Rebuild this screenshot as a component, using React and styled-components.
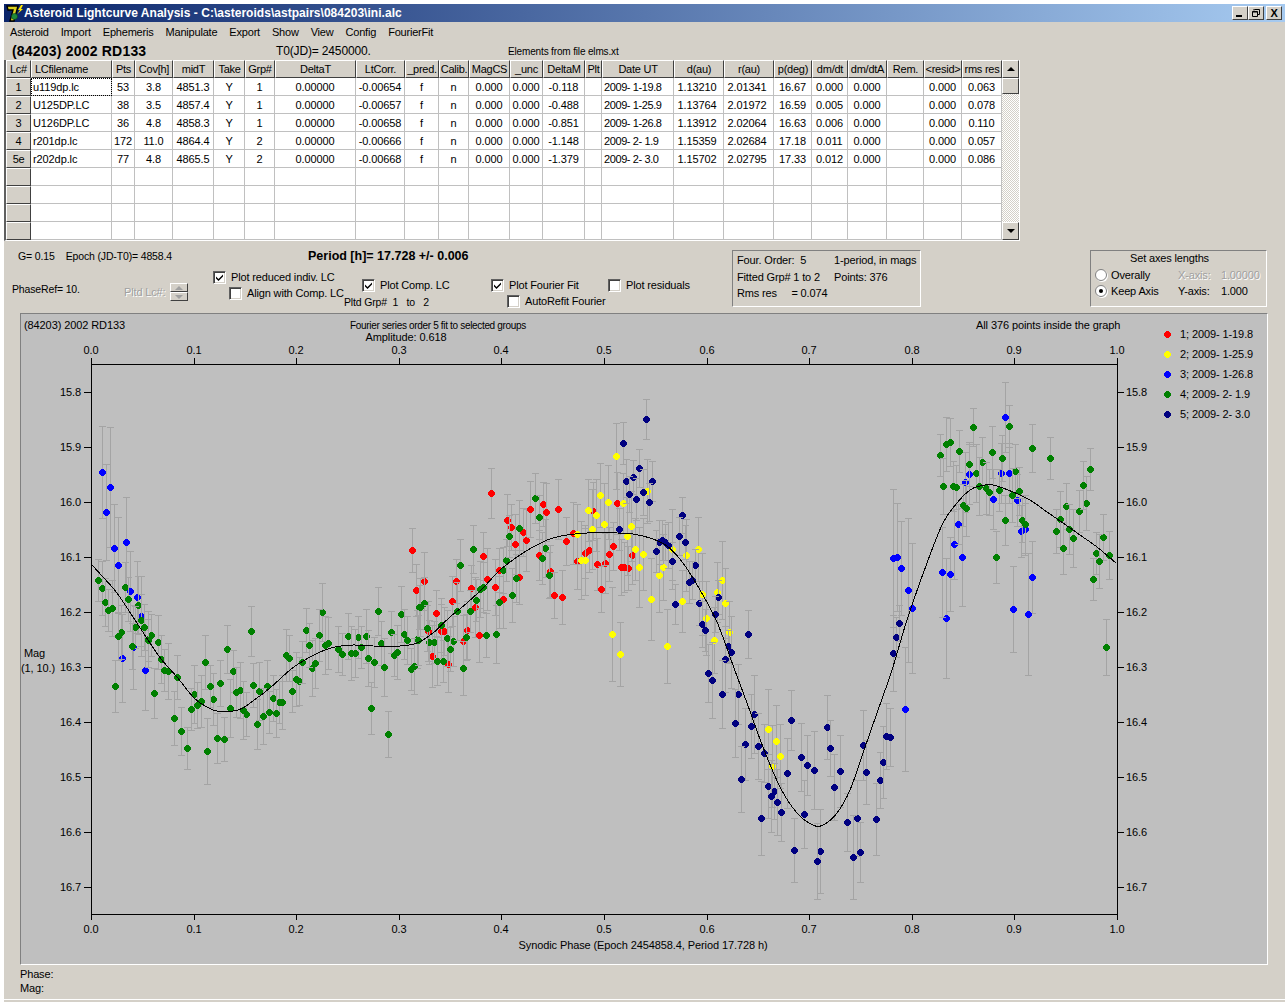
import React from "react";
import styled, { createGlobalStyle } from "styled-components";

const GlobalStyle = createGlobalStyle`
html, body { margin: 0; padding: 0; background: #fff; }
body { font-family: "Liberation Sans", Arial, sans-serif; font-size: 11px; color: #000; }
`;

const Face = "#d4d0c8";

const Window = styled.div`
width: 1288px;
height: 1002px;
box-sizing: border-box;
background: ${Face};
border-top: 4px solid #fff;
border-left: 4px solid #fff;
border-right: 3px solid #fff;
display: flex;
flex-direction: column;
overflow: hidden;
letter-spacing: -0.15px;
`;

const TitleBar = styled.div`
height: 18px;
flex: none;
display: flex;
align-items: center;
padding: 0 3px 0 2px;
background: linear-gradient(to right, #0a246a, #a6caf0);
`;

const TitleText = styled.div`
color: #fff;
font-weight: bold;
font-size: 12px;
letter-spacing: 0.03px;
flex: 1;
white-space: pre;
`;

const WinButton = styled.div`
width: 16px;
height: 14px;
box-sizing: border-box;
background: ${Face};
border: 1px solid;
border-color: #fff #404040 #404040 #fff;
display: flex;
align-items: center;
justify-content: center;
font-weight: bold;
font-size: 11px;
line-height: 1;
`;

const CloseButton = styled(WinButton)`
margin-left: 2px;
`;

const MenuBar = styled.div`
height: 20px;
flex: none;
display: flex;
align-items: center;
gap: 12px;
padding-left: 6px;
`;

const MenuItem = styled.span`
letter-spacing: -0.2px;
`;

const InfoRow = styled.div`
height: 18px;
flex: none;
display: grid;
grid-template-columns: 264px 232px 1fr;
align-items: center;
padding-left: 8px;
`;

const AsteroidName = styled.div`
font-weight: bold;
font-size: 14px;
letter-spacing: 0.2px;
`;

const SmallText = styled.div`
font-size: ${(p) => p.$size || 11}px;
white-space: pre;
`;

const GridFrame = styled.div`
flex: none;
width: 1016px;
box-sizing: border-box;
display: flex;
border-left: 2px solid #606060;
border-bottom: 1px solid #fff;
`;

const DataGrid = styled.div`
display: grid;
grid-template-columns: 25px 81px 23px 38px 41px 31px 30px 81px 49px 34px 30px 41px 33px 42px 17px 72px 50px 50px 38px 36px 39px 37px 38px 40px;
grid-auto-rows: 18px;
background: #fff;
`;

const HeadCell = styled.div`
box-sizing: border-box;
background: ${Face};
border: 1px solid;
border-color: #fff #404040 #404040 #fff;
display: flex;
align-items: center;
justify-content: ${(p) => (p.$left ? "flex-start" : "center")};
padding-left: ${(p) => (p.$left ? "3px" : "0")};
white-space: nowrap;
overflow: hidden;
letter-spacing: -0.25px;
`;

const Cell = styled.div`
box-sizing: border-box;
border-right: 1px solid #c0c0c0;
border-bottom: 1px solid #c0c0c0;
display: flex;
align-items: center;
justify-content: ${(p) => (p.$left ? "flex-start" : "center")};
padding-left: ${(p) => (p.$left ? "2px" : "0")};
padding-right: ${(p) => p.$pr || 0}px;
outline: ${(p) => (p.$focus ? "1px dotted #000" : "none")};
outline-offset: -1px;
white-space: pre;
letter-spacing: ${(p) => (p.$tight ? "-0.4px" : "-0.1px")};
`;

const ScrollBar = styled.div`
width: 18px;
display: flex;
flex-direction: column;
border-right: 1px solid #fff;
`;

const ScrollButton = styled.div`
height: ${(p) => p.$h || 18}px;
box-sizing: border-box;
flex: none;
background: ${Face};
border: 1px solid;
border-color: #fff #404040 #404040 #fff;
display: flex;
align-items: center;
justify-content: center;
`;

const ScrollTrack = styled.div`
flex: 1;
background: repeating-conic-gradient(#fff 0 25%, ${Face} 0 50%) 0 0 / 2px 2px;
`;

const Arrow = styled.div`
width: 0;
height: 0;
border-left: 4px solid transparent;
border-right: 4px solid transparent;
${(p) => (p.$up ? "border-bottom" : "border-top")}: 4px solid ${(p) => p.$color || "#000"};
`;

const Controls = styled.div`
height: 72px;
flex: none;
display: flex;
align-items: flex-start;
`;

const LeftControls = styled.div`
width: 728px;
padding: 9px 0 0 8px;
box-sizing: border-box;
`;

const TopLine = styled.div`
display: grid;
grid-template-columns: 290px 1fr;
padding-left: 6px;
`;

const PeriodText = styled.div`
font-weight: bold;
font-size: 12.5px;
letter-spacing: 0;
line-height: 13px;
`;

const OptionColumns = styled.div`
display: grid;
grid-template-columns: 112px 89px 149px 129px 117px 1fr;
margin-top: 6px;
`;

const OptionColumn = styled.div`
display: flex;
flex-direction: column;
padding-top: ${(p) => p.$top || 0}px;
`;

const CheckRow = styled.label`
display: flex;
align-items: center;
gap: 5px;
height: 16px;
margin-left: ${(p) => p.$indent || 0}px;
white-space: nowrap;
`;

const CheckBox = styled.span`
width: 13px;
height: 13px;
box-sizing: border-box;
flex: none;
background: #fff;
border: 1px solid;
border-color: #606060 #fff #fff #606060;
box-shadow: inset 1px 1px 0 #404040, inset -1px -1px 0 ${Face};
display: flex;
align-items: center;
justify-content: center;
`;

const Disabled = styled.span`
color: #a0a0a0;
text-shadow: 1px 1px 0 #fff;
`;

const Spinner = styled.div`
display: flex;
flex-direction: column;
width: 18px;
`;

const SpinnerRow = styled.div`
display: flex;
align-items: center;
gap: 5px;
`;

const GroupLabel = styled(SmallText)`
margin: 3px 0 0 -18px;
`;

const GroupBox = styled.div`
box-sizing: border-box;
width: ${(p) => p.$w}px;
height: 57px;
margin: 9px 0 0 ${(p) => p.$ml}px;
border: 1px solid;
border-color: #808080 #fff #fff #808080;
padding: 1px 4px 0;
`;

const BoxGrid = styled.div`
display: grid;
grid-template-columns: ${(p) => p.$cols};
grid-auto-rows: ${(p) => p.$row || 16.5}px;
align-items: center;
white-space: pre;
`;

const BoxTitle = styled.div`
text-align: center;
height: 15px;
line-height: 13px;
padding-right: 18px;
`;

const RadioRow = styled.div`
display: flex;
align-items: center;
gap: 4px;
`;

const Radio = styled.span`
width: 12px;
height: 12px;
box-sizing: border-box;
border-radius: 50%;
background: #fff;
border: 1px solid #808080;
box-shadow: 1px 1px 0 #fff;
display: flex;
align-items: center;
justify-content: center;
`;

const RadioDot = styled.span`
width: 4px;
height: 4px;
border-radius: 50%;
background: #000;
`;

const PlotPanel = styled.div`
width: 1248px;
height: 652px;
flex: none;
box-sizing: border-box;
margin-left: 16px;
background: #bfbfbf;
border: 1px solid;
border-color: #808080 #fff #fff #808080;
`;

const PlotSvg = styled.svg`
display: block;
font-family: "Liberation Sans", Arial, sans-serif;
font-size: 11px;
letter-spacing: -0.1px;
`;

const Footer = styled.div`
margin-left: 16px;
padding-top: 2px;
line-height: 14px;
flex: 1;
`;

const BottomEdge = styled.div`
height: 1px;
margin-bottom: 2px;
flex: none;
background: #fff;
`;

const columns = ["Lc#", "LCfilename", "Pts", "Cov[h]", "midT", "Take", "Grp#", "DeltaT", "LtCorr.", "_pred.", "Calib.", "MagCS", "_unc", "DeltaM", "Plt", "Date UT", "d(au)", "r(au)", "p(deg)", "dm/dt", "dm/dtA", "Rem.", "<resid>", "rms res"];

const rows = [
  ["1", "u119dp.lc", "53", "3.8", "4851.3", "Y", "1", "0.00000", "-0.00654", "f", "n", "0.000", "0.000", "-0.118", "", "2009- 1-19.8", "1.13210", "2.01341", "16.67", "0.000", "0.000", "", "0.000", "0.063"],
  ["2", "U125DP.LC", "38", "3.5", "4857.4", "Y", "1", "0.00000", "-0.00657", "f", "n", "0.000", "0.000", "-0.488", "", "2009- 1-25.9", "1.13764", "2.01972", "16.59", "0.005", "0.000", "", "0.000", "0.078"],
  ["3", "U126DP.LC", "36", "4.8", "4858.3", "Y", "1", "0.00000", "-0.00658", "f", "n", "0.000", "0.000", "-0.851", "", "2009- 1-26.8", "1.13912", "2.02064", "16.63", "0.006", "0.000", "", "0.000", "0.110"],
  ["4", "r201dp.lc", "172", "11.0", "4864.4", "Y", "2", "0.00000", "-0.00666", "f", "n", "0.000", "0.000", "-1.148", "", "2009- 2- 1.9", "1.15359", "2.02684", "17.18", "0.011", "0.000", "", "0.000", "0.057"],
  ["5e", "r202dp.lc", "77", "4.8", "4865.5", "Y", "2", "0.00000", "-0.00668", "f", "n", "0.000", "0.000", "-1.379", "", "2009- 2- 3.0", "1.15702", "2.02795", "17.33", "0.012", "0.000", "", "0.000", "0.086"],
  ...[0, 1, 2, 3].map(() => Array(24).fill("")),
];

// points read off the plot, page pixels; a third value is the error bar half length where it was measured
const series = [
  {
    color: "#ff0000", err: 27, label: "1; 2009- 1-19.8",
    pts: [[412,550],[424,581],[416,590],[436,613],[428,631],[441,631],[444,631],[432,656],[448,664],[452,601],[456,581],[467,630],[463,641],[471,588],[475,607],[479,635],[483,556],[487,579],[495,587],[491,493],[499,570],[503,599],[507,520],[511,527],[515,544],[519,577],[523,532],[526,540],[530,509],[539,555],[543,504],[546,512],[550,571],[554,595],[558,509],[562,597],[566,541],[573,533],[577,561],[585,553],[589,550],[593,511],[597,564],[601,589],[605,563],[609,554],[613,546],[617,503],[621,567],[624,567],[628,568],[632,555]],
  },
  {
    color: "#ffff00", err: 36, label: "2; 2009- 1-25.9",
    pts: [[577,534],[581,560],[585,560],[588,510],[592,529],[596,515],[600,495],[604,524],[608,502],[616,456],[623,503],[627,536],[631,526],[635,549],[639,567],[643,554],[647,491],[651,599],[659,575],[663,567],[667,646,37],[612,634,47],[620,654,32],[682,601],[672,549],[686,555],[698,549],[702,594],[706,618],[714,640],[717,592],[722,580],[725,603],[729,632],[768,729],[776,741],[780,756],[772,766]],
  },
  {
    color: "#0000ff", err: 46, label: "3; 2009- 1-26.8",
    pts: [[102,472,46],[110,487,60],[106,512,48],[114,548,44],[126,542,45],[118,565,48],[130,591,40],[137,597,36],[141,616,40],[133,647,42],[122,658,44],[145,670,40],[893,558,69],[897,557,54],[901,568,47],[908,590,72],[912,608,65],[946,618,60],[942,572,45],[950,574,37],[954,544,35],[962,557,49],[958,524,20],[969,474,30],[965,482,30],[993,499,30],[1001,473,30],[1009,473,30],[1005,417,35],[1017,500,26],[1021,531,26],[1025,529,26],[1032,577,36],[1013,609,43],[1028,614,61],[905,709,62]],
  },
  {
    color: "#008000", err: 25, label: "4; 2009- 2- 1.9",
    pts: [[98,580],[102,588],[105,602],[108,610],[112,608],[125,587],[128,599],[138,605],[141,620],[144,627],[135,627],[121,632],[118,636],[151,635],[148,639],[251,631],[306,630],[322,612],[319,635],[348,636],[358,637],[366,636],[378,611],[391,632],[401,614],[404,634],[419,607],[417,639],
      [115,686],[132,646],[148,640],[158,642],[161,659],[164,670],[168,671],[154,693],[177,677],[194,694],[201,701],[197,705],[191,709],[174,718],[181,731],[187,748],[207,751,33],[217,738],[224,739],[230,708],[213,699],[220,683],[210,686],[205,662],[227,649],[233,671],[240,690],[236,692],[253,685],[259,691],[267,686],[273,698],[279,702],[282,702],[276,713],[269,712],[263,716],[257,724],[246,714],[243,710],[286,655],[289,658],[292,691],[296,679],[299,681],[302,662],[312,668],[315,663],[309,645],[325,645],[328,643],[338,649],[342,654],[351,653],[355,653],[361,647],[368,658],[374,662],[381,643],[384,667],[371,708],[388,734],[394,655],[397,652],[407,640],[411,669],[414,666],[418,640],[429,642],
      [420,607],[424,603],[427,628],[434,642],[441,625],[437,661],[443,661],[447,638],[453,641],[450,649],[457,611],[460,565],[466,637],[470,611],[463,668],[473,549],[476,600],[480,589],[483,587],[486,635],[496,634],[499,602],[503,570],[506,560],[512,595],[516,578],[509,536],[519,528],[535,498],[539,517],[545,548],[542,558],[549,575],
      [940,455],[946,444],[950,442],[959,451],[973,427,19],[982,462],[969,464],[976,473],[992,452],[1002,458],[1009,426],[1015,471],[1032,448],[1050,458],[943,486],[953,486],[956,487],[979,486],[986,488],[989,492],[999,490],[1012,495],[1019,491],[963,505],[966,508],[1005,520],[1022,520],[1025,524],[996,557],[1066,506],[1079,511],[1086,503],[1083,485],[1090,469],[1060,519],[1069,529],[1056,531],[1073,538],[1063,548],[1103,537],[1096,553],[1099,561],[1109,555],[1093,579],[1106,647]],
  },
  {
    color: "#000080", err: 20, label: "5; 2009- 2- 3.0",
    pts: [[646,419,20],[623,443],[639,468],[633,477],[626,481],[652,481],[629,494],[643,492],[636,499],[649,502],[682,515,18],[619,529],[679,536],[685,542],[659,542],[662,540],[665,542],[668,545],[656,551],[672,561],[695,565],[689,582],[692,580],[718,597],[699,603],[675,604],[715,614],[702,624],[705,630],[748,634,24],[728,646],[731,652],[725,659],[708,673],[712,680],[722,694],[738,694],[754,714],[735,723,34],[751,726],[791,720,30],[745,744],[758,746],[764,753],[741,779,33],[801,757],[807,765],[814,770],[787,773],[768,786],[774,791],[771,796],[777,802],[781,812],[761,818,37],[804,814],[794,850,32],[820,851,42],[817,861,38],[827,727],[830,748],[840,771],[834,787],[847,822],[857,818],[876,819,36],[860,852],[853,857,42],[863,745],[866,772],[880,780],[883,762],[886,736],[890,737],[893,653],[896,637],[899,623]],
  },
];

const fitLine = [[91,564],[103,577],[117,593],[133,617],[150,643],[161,659],[177,677],[194,698],[207,707],[217,711],[233,711],[243,708],[257,698],[270,688],[290,670],[303,661],[320,652],[335,647],[353,645],[373,646],[400,646],[417,643],[433,633],[450,617],[467,603],[483,588],[500,570],[517,557],[533,547],[550,539],[567,535],[587,533],[617,533],[633,534],[650,538],[667,546],[683,563],[700,590],[717,622],[734,668],[747,703],[763,747],[780,787],[797,813],[813,825],[823,825],[837,813],[850,790],[863,753],[877,713],[892,670],[907,620],[927,563],[943,523],[957,503],[970,490],[980,486],[993,485],[1013,492],[1030,500],[1047,512],[1063,523],[1080,535],[1097,547],[1116,563]];

const X0 = 91;
const X1 = 1117;
const Y_TOP = 364;
const Y_BOT = 914;
const xTicks = [...Array(11).keys()].map((i) => ({ x: Math.round(X0 + (i * (X1 - X0)) / 10), label: (i / 10).toFixed(1) }));
const yTicks = [...Array(10).keys()].map((i) => ({ y: 392 + i * 55, label: (15.8 + i / 10).toFixed(1) }));

function smoothPath(p) {
  let d = `M${p[0][0]} ${p[0][1]}`;
  for (let i = 0; i < p.length - 1; i++) {
    const a = p[i - 1] || p[i];
    const b = p[i];
    const c = p[i + 1];
    const e = p[i + 2] || c;
    d += `C${b[0] + (c[0] - a[0]) / 6} ${b[1] + (c[1] - a[1]) / 6} ${c[0] - (e[0] - b[0]) / 6} ${c[1] - (e[1] - b[1]) / 6} ${c[0]} ${c[1]}`;
  }
  return d;
}

function errorSize(s, i, p) {
  if (p[2]) return p[2];
  let base = s.err;
  if (s.color === "#000080" && p[1] > 650) base = 34;
  return Math.round(base * (0.82 + (((i * 37) % 10) / 10) * 0.36));
}

// the pixel disc GDI draws, 7 across
function dotPath(x, y) {
  return `M${x - 1} ${y - 3}h3v1h1v1h1v3h-1v1h-1v1h-3v-1h-1v-1h-1v-3h1v-1h1z`;
}

function Point({ s, i, p }) {
  const [x, y] = p;
  const e = errorSize(s, i, p);
  return (
    <g>
      <path d={`M${x + 0.5} ${y - e}V${y + e}M${x - 3} ${y - e + 0.5}H${x + 4}M${x - 3} ${y + e + 0.5}H${x + 4}`} stroke="#a4a4a4" fill="none" />
      <path d={dotPath(x, y)} fill={s.color} />
    </g>
  );
}

function LightcurvePlot() {
  return (
    <PlotSvg width="1246" height="650" viewBox="21 314 1246 650" shapeRendering="crispEdges">
      <text x="24" y="329">(84203) 2002 RD133</text>
      <text x="438" y="329" textAnchor="middle" fontSize="10" letterSpacing="-0.33">Fourier series order 5 fit to selected groups</text>
      <text x="406" y="341" textAnchor="middle">Amplitude: 0.618</text>
      <text x="976" y="329">All 376 points inside the graph</text>
      <text x="24" y="657">Mag</text>
      <text x="21" y="672">(1, 10.)</text>
      <text x="643" y="949" textAnchor="middle">Synodic Phase (Epoch 2454858.4, Period 17.728 h)</text>

      {series.map((s) =>
        s.pts.map((p, i) => <Point key={s.color + i} s={s} i={i} p={p} />)
      )}

      <path d={smoothPath(fitLine)} stroke="#000" fill="none" strokeWidth="1" />
      <rect x={X0 + 0.5} y={Y_TOP + 0.5} width={X1 - X0} height={Y_BOT - Y_TOP} fill="none" stroke="#000" />

      {xTicks.map((t) => (
        <g key={t.label}>
          <path d={`M${t.x + 0.5} ${Y_TOP - 6}V${Y_TOP}M${t.x + 0.5} ${Y_BOT}V${Y_BOT + 6}`} stroke="#000" />
          <text x={t.x} y="354" textAnchor="middle">{t.label}</text>
          <text x={t.x} y="933" textAnchor="middle">{t.label}</text>
        </g>
      ))}
      {yTicks.map((t) => (
        <g key={t.label}>
          <path d={`M${X0 - 7} ${t.y + 0.5}H${X0}M${X1} ${t.y + 0.5}H${X1 + 7}`} stroke="#000" />
          <text x={X0 - 10} y={t.y + 4} textAnchor="end">{t.label}</text>
          <text x={X1 + 9} y={t.y + 4}>{t.label}</text>
        </g>
      ))}

      {series.map((s, i) => (
        <g key={s.label}>
          <path d={dotPath(1167, 334 + i * 20)} fill={s.color} />
          <text x="1180" y={338 + i * 20}>{s.label}</text>
        </g>
      ))}
    </PlotSvg>
  );
}

function Check({ checked }) {
  return (
    <CheckBox>
      {checked && (
        <svg width="9" height="9" viewBox="0 0 9 9">
          <path d="M1 3.5 L3.5 6 L8 1.5 V3.5 L3.5 8 L1 5.5 Z" fill="#000" />
        </svg>
      )}
    </CheckBox>
  );
}

function AppLogo() {
  return (
    <svg width="18" height="17" viewBox="0 0 18 17">
      <path d="M1 1 H12 L8 16 H4 L7 5 H2 Z" fill="#d8d020" stroke="#000" strokeWidth="1.4" />
      <circle cx="8.5" cy="11.5" r="3" fill="#1f8a3a" stroke="#0a4020" strokeWidth="0.6" />
      <path d="M15 0 L12 5 H14 L11.5 9 L17 4 H15 L17 0 Z" fill="#ffe800" />
    </svg>
  );
}

export default function App() {
  return (
    <>
      <GlobalStyle />
      <Window>
        <TitleBar>
          <AppLogo />
          <TitleText>Asteroid Lightcurve Analysis - C:\asteroids\astpairs\084203\ini.alc</TitleText>
          <WinButton>
            <svg width="10" height="10" viewBox="0 0 10 10"><rect x="1" y="7" width="6" height="2" /></svg>
          </WinButton>
          <WinButton>
            <svg width="10" height="10" viewBox="0 0 10 10">
              <path d="M3.5 1.5H8.5V6.5H7M3 1V2.5M1.5 3.5H6.5V8.5H1.5ZM1.5 4H6.5" fill="none" stroke="#000" />
            </svg>
          </WinButton>
          <CloseButton>X</CloseButton>
        </TitleBar>

        <MenuBar>
          {["Asteroid", "Import", "Ephemeris", "Manipulate", "Export", "Show", "View", "Config", "FourierFit"].map((m) => (
            <MenuItem key={m}>{m}</MenuItem>
          ))}
        </MenuBar>

        <InfoRow>
          <AsteroidName>(84203) 2002 RD133</AsteroidName>
          <SmallText $size={12}>T0(JD)= 2450000.</SmallText>
          <SmallText $size={10}>Elements from file elms.xt</SmallText>
        </InfoRow>

        <GridFrame>
          <DataGrid>
            {columns.map((c, i) => (
              <HeadCell key={c} $left={i === 1}>{c}</HeadCell>
            ))}
            {rows.map((r, ri) =>
              r.map((v, ci) =>
                ci === 0 ? (
                  <HeadCell key={ri + "-" + ci}>{v}</HeadCell>
                ) : (
                  <Cell
                    key={ri + "-" + ci}
                    $left={ci === 1 || ci === 15}
                    $tight={ci === 15}
                    $pr={ci === 16 || ci === 17 ? 3 : 0}
                    $focus={ri === 0 && ci === 1}
                  >
                    {v}
                  </Cell>
                )
              )
            )}
          </DataGrid>
          <ScrollBar>
            <ScrollButton><Arrow $up /></ScrollButton>
            <ScrollButton $h={16} />
            <ScrollTrack />
            <ScrollButton><Arrow /></ScrollButton>
          </ScrollBar>
        </GridFrame>

        <Controls>
          <LeftControls>
            <TopLine>
              <SmallText $size={10.5}>G= 0.15    Epoch (JD-T0)= 4858.4</SmallText>
              <PeriodText>Period [h]= 17.728 +/- 0.006</PeriodText>
            </TopLine>
            <OptionColumns>
              <OptionColumn $top={14}><SmallText $size={10.5}>PhaseRef= 10.</SmallText></OptionColumn>
              <OptionColumn $top={14}>
                <SpinnerRow>
                  <Disabled>Pltd Lc#:</Disabled>
                  <Spinner>
                    <ScrollButton $h={9}><Arrow $up $color="#a0a0a0" /></ScrollButton>
                    <ScrollButton $h={9}><Arrow $color="#a0a0a0" /></ScrollButton>
                  </Spinner>
                </SpinnerRow>
              </OptionColumn>
              <OptionColumn>
                <CheckRow><Check checked />Plot reduced indiv. LC</CheckRow>
                <CheckRow $indent={16}><Check />Align with Comp. LC</CheckRow>
              </OptionColumn>
              <OptionColumn $top={8}>
                <CheckRow><Check checked />Plot Comp. LC</CheckRow>
                <GroupLabel $size={10.5}>Pltd Grp#  1   to   2</GroupLabel>
              </OptionColumn>
              <OptionColumn $top={8}>
                <CheckRow><Check checked />Plot Fourier Fit</CheckRow>
                <CheckRow $indent={16}><Check />AutoRefit Fourier</CheckRow>
              </OptionColumn>
              <OptionColumn $top={8}>
                <CheckRow><Check />Plot residuals</CheckRow>
              </OptionColumn>
            </OptionColumns>
          </LeftControls>

          <GroupBox $w={189} $ml={0}>
            <BoxGrid $cols="97px 1fr">
              <span>Four. Order:  5</span><span>1-period, in mags</span>
              <span>Fitted Grp# 1 to 2</span><span>Points: 376</span>
              <span>Rms res     = 0.074</span><span />
            </BoxGrid>
          </GroupBox>

          <GroupBox $w={177} $ml={169}>
            <BoxTitle>Set axes lengths</BoxTitle>
            <BoxGrid $cols="83px 43px 1fr" $row={16}>
              <RadioRow><Radio />Overally</RadioRow>
              <Disabled>X-axis:</Disabled>
              <Disabled>1.00000</Disabled>
              <RadioRow><Radio><RadioDot /></Radio>Keep Axis</RadioRow>
              <span>Y-axis:</span>
              <span>1.000</span>
            </BoxGrid>
          </GroupBox>
        </Controls>

        <PlotPanel>
          <LightcurvePlot />
        </PlotPanel>

        <Footer>
          <div>Phase:</div>
          <div>Mag:</div>
        </Footer>
        <BottomEdge />
      </Window>
    </>
  );
}
